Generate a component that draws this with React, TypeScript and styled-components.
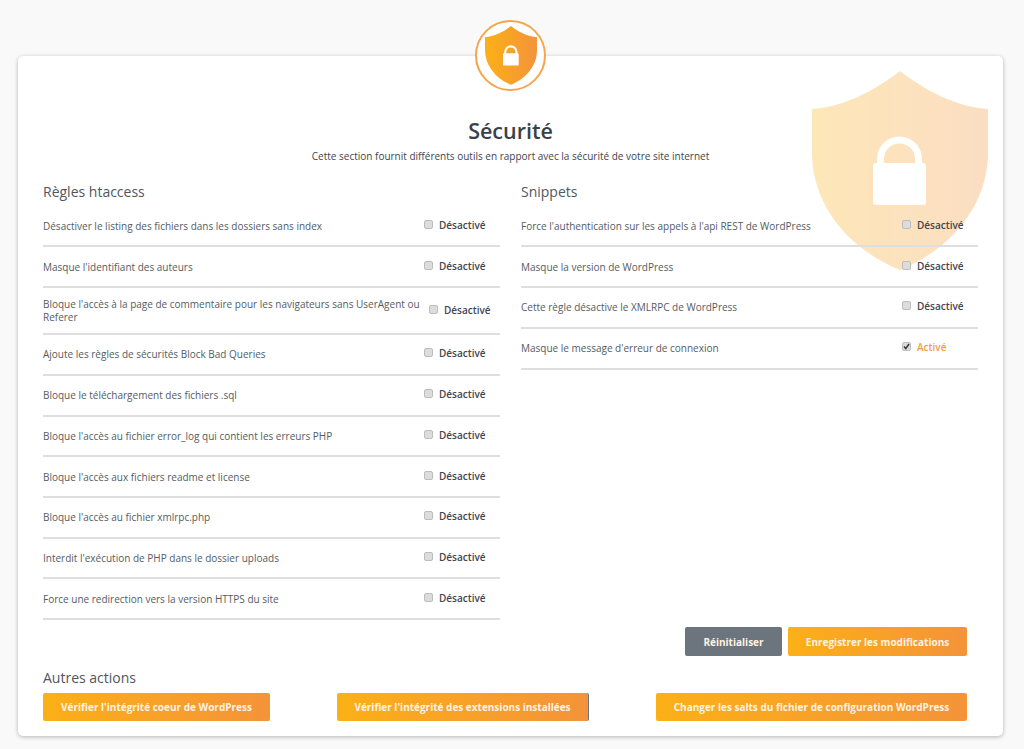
import React from "react";
import styled, { createGlobalStyle } from "styled-components";

const Global = createGlobalStyle`
  html, body { margin: 0; padding: 0; background: #f9f9f9; }
  body { font-family: "Open Sans", "Noto Sans", sans-serif; color: #4f5660; }
  * { box-sizing: border-box; }
`;

const Page = styled.div`
  width: 1024px;
  height: 749px;
  padding: 56px 21px 0 18px;
  overflow: hidden;
  position: relative;
`;

const Card = styled.main`
  position: relative;
  width: 985px;
  height: 680px;
  padding: 61px 25px 0;
  background: #fff;
  border-radius: 5px;
  box-shadow: 0 1px 4px rgba(0, 0, 0, 0.28);
`;

const LogoBadge = styled.div`
  position: absolute;
  left: 457px;
  top: -36px;
  width: 71px;
  height: 71px;
  display: flex;
  align-items: center;
  justify-content: center;
  border-radius: 50%;
  background: #fff;
  border: 2px solid #f5a64c;
`;

const Watermark = styled.div`
  position: absolute;
  left: 794px;
  top: 15px;
  opacity: 0.3;
  line-height: 0;
`;

const Content = styled.div`
  position: relative;
`;

const Title = styled.h1`
  margin: 0;
  font-size: 21.5px;
  line-height: 28px;
  font-weight: 600;
  text-align: center;
  color: #3b4149;
`;

const Subtitle = styled.p`
  margin: 4px 0 0;
  font-size: 10px;
  line-height: 14px;
  text-align: center;
  color: #3f454d;
`;

const Columns = styled.div`
  display: grid;
  grid-template-columns: 457px 457px;
  column-gap: 21px;
  margin-top: 19px;
  height: 445px;
`;

const Heading = styled.h2`
  margin: 0;
  font-size: 14px;
  line-height: 20px;
  font-weight: 400;
  color: #50565e;
`;

const RowList = styled.div`
  margin-top: 4.7px;
`;

const Row = styled.div<{ $tall?: boolean }>`
  display: flex;
  align-items: center;
  height: ${(p) => (p.$tall ? 47 : 40.72)}px;
  border-bottom: 2px solid #dedede;
`;

const Label = styled.div<{ $narrow?: boolean }>`
  flex: 1;
  font-size: 10px;
  line-height: 13px;
  color: #555b63;
  padding-top: 1px;
  max-width: ${(p) => (p.$narrow ? "385px" : "none")};
  margin-right: auto;
`;

const Toggle = styled.label<{ $end: number }>`
  display: flex;
  align-items: center;
  gap: 6px;
  margin-right: ${(p) => p.$end}px;
  margin-top: -1px;
  font-size: 10px;
  line-height: 13px;
  cursor: pointer;
`;

const Box = styled.span`
  position: relative;
  width: 9px;
  height: 9px;
  border-radius: 2px;
  background: #dcdcdc;
  border: 1px solid #bdbdbd;
  display: flex;
  align-items: center;
  justify-content: center;
  margin-top: -2px;
`;

const Status = styled.span<{ $on?: boolean }>`
  font-weight: 600;
  color: ${(p) => (p.$on ? "#f4a040" : "#3f4650")};
  width: 46px;
  white-space: nowrap;
`;

const SaveBar = styled.div`
  display: flex;
  justify-content: flex-end;
  gap: 6px;
  padding-right: 11px;
`;

const Button = styled.button<{ $grey?: boolean; $w: number; $h?: number; $edge?: boolean }>`
  width: ${(p) => p.$w}px;
  height: ${(p) => p.$h ?? 29}px;
  border: 0;
  border-right: ${(p) => (p.$edge ? "1px solid #6c757d" : "0")};
  border-radius: 2px;
  padding: 0;
  font-family: "Open Sans", sans-serif;
  font-size: 10px;
  font-weight: 700;
  color: #fdf3e3;
  background: ${(p) => (p.$grey ? "#6c757d" : "linear-gradient(90deg, #fbb017, #f4933a)")};
`;

const ActionsTitle = styled(Heading)`
  margin-top: 12px;
`;

const ActionBar = styled.div`
  display: flex;
  justify-content: space-between;
  margin-top: 5px;
  padding-right: 11px;
`;

const Shield = ({ w, id }: { w: number; id: string }) => (
  <svg width={w} height={(w * 200) / 176} viewBox="0 0 176 200">
    <defs>
      <linearGradient id={id} x1="0" x2="1" y1="0" y2="0">
        <stop offset="0" stopColor="#fbb017" />
        <stop offset="1" stopColor="#f4933a" />
      </linearGradient>
    </defs>
    <path
      d="M88 0C62 20 32 36 0 38L0 82C0 128 30 175 88 199C146 175 176 128 176 82L176 38C144 36 114 20 88 0Z"
      fill={`url(#${id})`}
    />
    <rect x="61" y="92" width="53" height="42" rx="3" fill="#fff" />
    <path d="M68.5 95V88a19 19 0 0 1 38 0V95" fill="none" stroke="#fff" strokeWidth="7" />
  </svg>
);

const Check = () => (
  <svg width="7" height="7" viewBox="0 0 7 7">
    <path d="M1 3.6L2.8 5.6L6 1" fill="none" stroke="#333" strokeWidth="1.5" />
  </svg>
);

type Rule = { text: string; tall?: boolean; on?: boolean };

const left: Rule[] = [
  { text: "Désactiver le listing des fichiers dans les dossiers sans index" },
  { text: "Masque l'identifiant des auteurs" },
  { text: "Bloque l'accès à la page de commentaire pour les navigateurs sans UserAgent ou Referer", tall: true },
  { text: "Ajoute les règles de sécurités Block Bad Queries" },
  { text: "Bloque le téléchargement des fichiers .sql" },
  { text: "Bloque l'accès au fichier error_log qui contient les erreurs PHP" },
  { text: "Bloque l'accès aux fichiers readme et license" },
  { text: "Bloque l'accès au fichier xmlrpc.php" },
  { text: "Interdit l'exécution de PHP dans le dossier uploads" },
  { text: "Force une redirection vers la version HTTPS du site" },
];

const right: Rule[] = [
  { text: "Force l'authentication sur les appels à l'api REST de WordPress" },
  { text: "Masque la version de WordPress" },
  { text: "Cette règle désactive le XMLRPC de WordPress" },
  { text: "Masque le message d'erreur de connexion", on: true },
];

const RuleRow = ({ rule, end }: { rule: Rule; end: number }) => (
  <Row $tall={rule.tall}>
    <Label $narrow={rule.tall}>{rule.text}</Label>
    <Toggle $end={rule.tall ? end - 5 : end}>
      <Box>{rule.on && <Check />}</Box>
      <Status $on={rule.on}>{rule.on ? "Activé" : "Désactivé"}</Status>
    </Toggle>
  </Row>
);

export default function App() {
  return (
    <Page>
      <Global />
      <Card>
        <LogoBadge>
          <Shield w={52} id="logoGrad" />
        </LogoBadge>
        <Watermark>
          <Shield w={176} id="markGrad" />
        </Watermark>
        <Content>
          <Title>Sécurité</Title>
          <Subtitle>Cette section fournit différents outils en rapport avec la sécurité de votre site internet</Subtitle>
          <Columns>
            <section>
              <Heading>Règles htaccess</Heading>
              <RowList>
                {left.map((r) => (
                  <RuleRow key={r.text} rule={r} end={15} />
                ))}
              </RowList>
            </section>
            <section>
              <Heading>Snippets</Heading>
              <RowList>
                {right.map((r) => (
                  <RuleRow key={r.text} rule={r} end={15} />
                ))}
              </RowList>
            </section>
          </Columns>
          <SaveBar>
            <Button $grey $w={97}>Réinitialiser</Button>
            <Button $w={179}>Enregistrer les modifications</Button>
          </SaveBar>
          <ActionsTitle>Autres actions</ActionsTitle>
          <ActionBar>
            <Button $w={227} $h={28}>Vérifier l'intégrité coeur de WordPress</Button>
            <Button $w={252} $h={28} $edge>Vérifier l'intégrité des extensions installées</Button>
            <Button $w={311} $h={28}>Changer les salts du fichier de configuration WordPress</Button>
          </ActionBar>
        </Content>
      </Card>
    </Page>
  );
}
